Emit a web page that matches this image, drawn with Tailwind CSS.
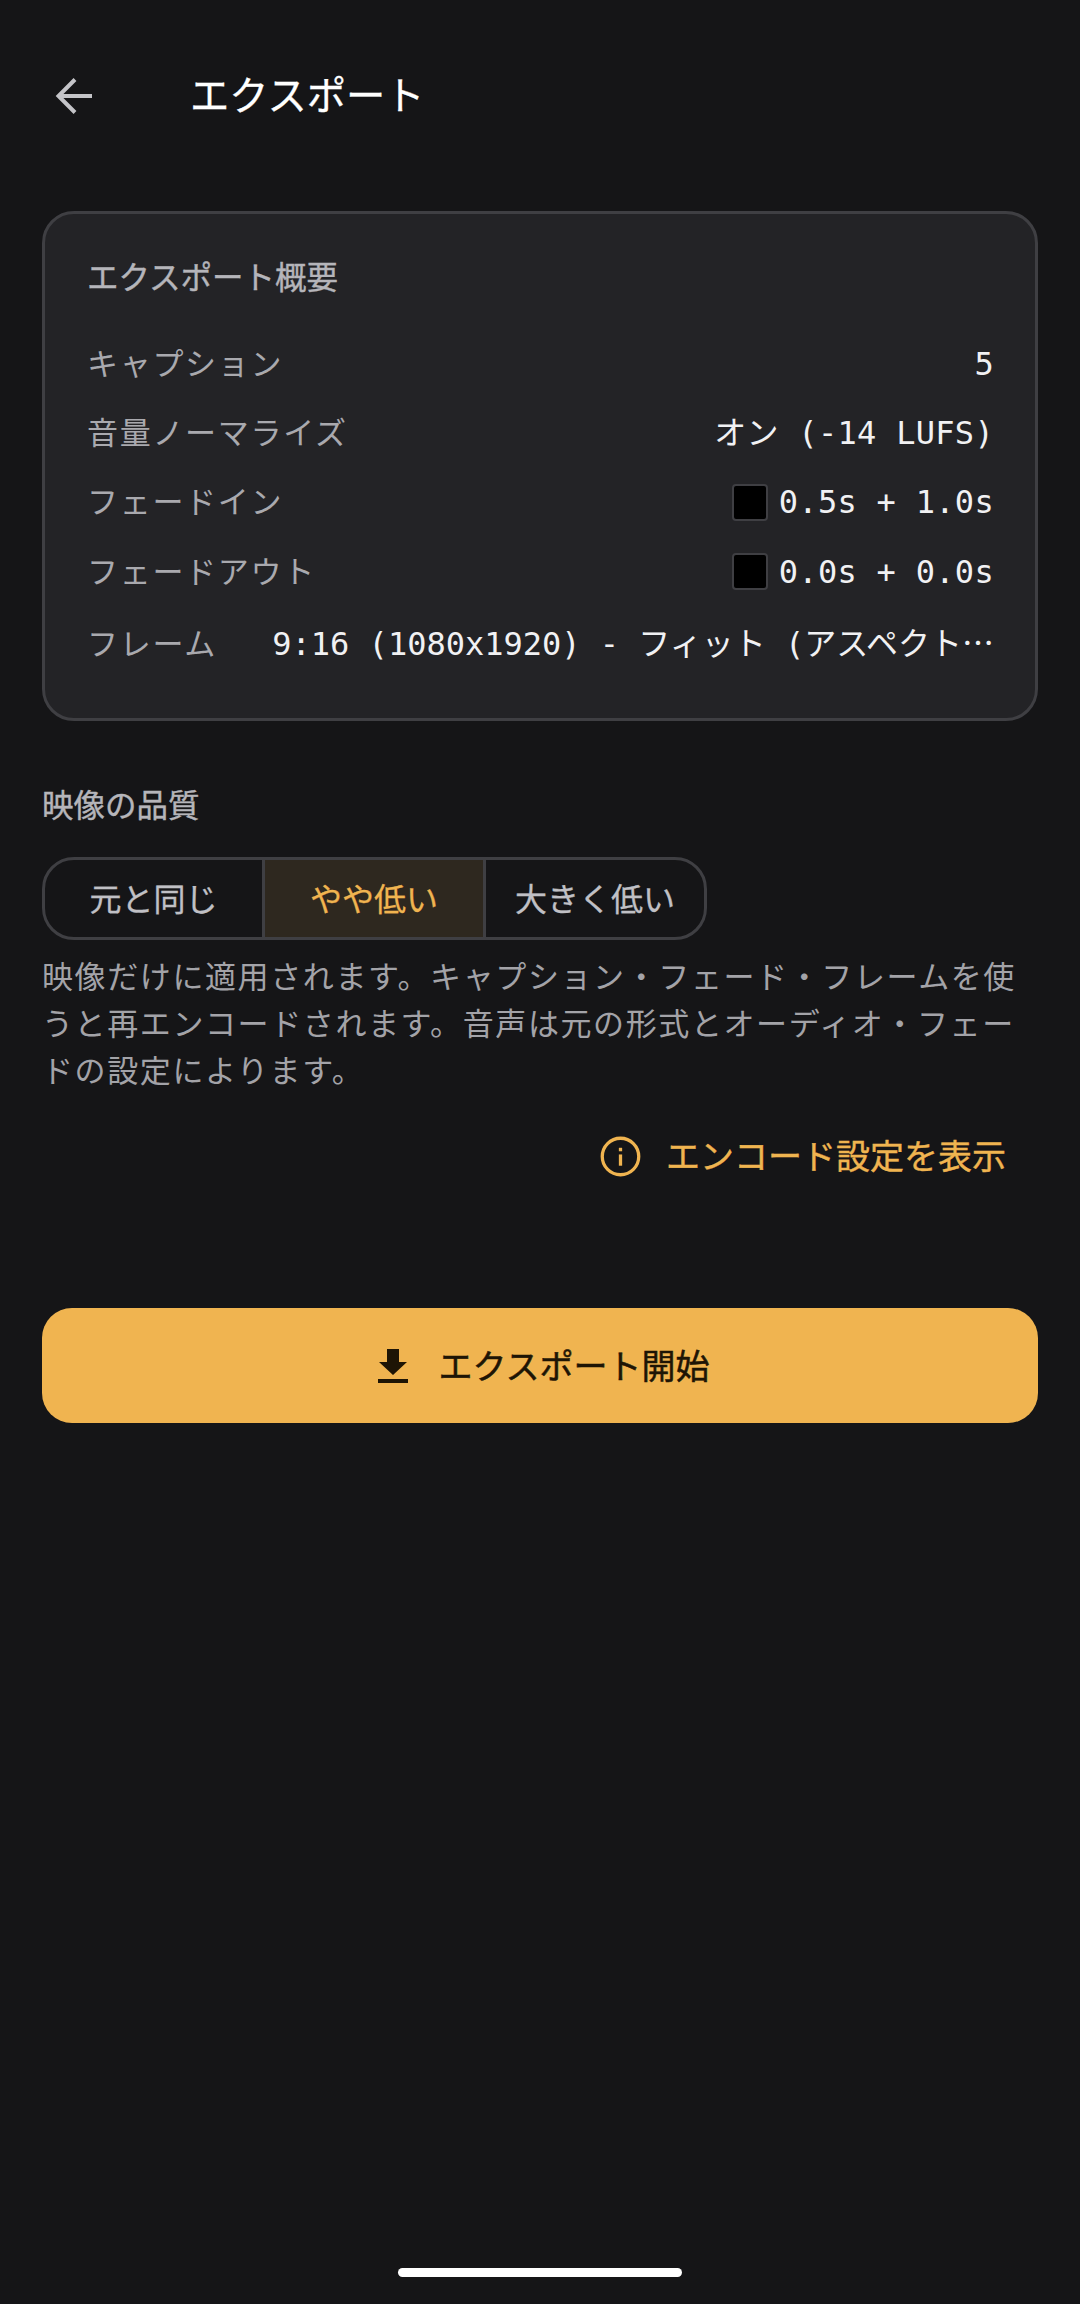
<!DOCTYPE html>
<html lang="ja"><head><meta charset="utf-8">
<script src="https://cdn.jsdelivr.net/npm/@tailwindcss/browser@4"></script>
</head>
<body class="m-0">
<div class="w-[1080px] h-[2304px] bg-[#151517] flex flex-col font-['Inter','Noto_Sans_CJK_JP',sans-serif] relative overflow-hidden">
  <header class="h-[192px] flex items-center pl-[52px] shrink-0">
    <svg class="w-[44px] h-[44px] text-[#c4c4c8]" viewBox="0 0 44 44" fill="none" stroke="currentColor" stroke-width="4"><path d="M40 22H7M23 5.5L6.5 22L23 38.5"/></svg>
    <h1 class="ml-[94px] text-[39.3px] leading-[48px] text-white font-normal [-webkit-text-stroke:0.3px_currentColor]">エクスポート</h1>
  </header>
  <main class="px-[42px] flex flex-col">
    <section class="mt-[19px] h-[510px] rounded-[32px] border-[3px] border-[#3f3f43] bg-[#232326] px-[41px] pt-[42px] flex flex-col">
      <h2 class="ml-[1px] text-[31.5px] leading-[44px] font-normal text-[#b5b5ba] [-webkit-text-stroke:0.4px_currentColor]">エクスポート概要</h2>
      <div class="mt-[40px] ml-[1px] flex flex-col gap-[21.2px] text-[31px] leading-[48px] tracking-[1.7px] text-[#a9a9ae]">
        <div class="flex justify-between items-center"><span>キャプション</span><span class="font-['DejaVu_Sans_Mono','Noto_Sans_CJK_JP',monospace] text-[#f1f1f3] tracking-[0.3px] text-[32px]">5</span></div>
        <div class="flex justify-between items-center"><span>音量ノーマライズ</span><span class="font-['DejaVu_Sans_Mono','Noto_Sans_CJK_JP',monospace] text-[#f1f1f3] tracking-[0.3px] text-[32px]">オン (-14 LUFS)</span></div>
        <div class="flex justify-between items-center"><span>フェードイン</span><span class="flex items-center gap-[11px] font-['DejaVu_Sans_Mono','Noto_Sans_CJK_JP',monospace] text-[#f1f1f3] tracking-[0.3px] text-[32px]"><i class="block w-[36px] h-[37px] bg-black border-[2px] border-[#3f3f43] rounded-[4px]"></i>0.5s + 1.0s</span></div>
        <div class="flex justify-between items-center"><span>フェードアウト</span><span class="flex items-center gap-[11px] font-['DejaVu_Sans_Mono','Noto_Sans_CJK_JP',monospace] text-[#f1f1f3] tracking-[0.3px] text-[32px]"><i class="block w-[36px] h-[37px] bg-black border-[2px] border-[#3f3f43] rounded-[4px]"></i>0.0s + 0.0s</span></div>
        <div class="flex justify-between items-center"><span class="shrink-0">フレーム</span><span class="mb-[3px] whitespace-nowrap font-['DejaVu_Sans_Mono','Noto_Sans_CJK_JP',monospace] text-[#f1f1f3] tracking-normal text-[32px]">9:16 (1080x1920) - フィット (アスペクト<span class="font-['Noto_Sans_CJK_JP']">…</span></span></div>
      </div>
    </section>
    <h2 class="mt-[63px] text-[31.5px] leading-[44px] font-normal text-[#b5b5ba] [-webkit-text-stroke:0.4px_currentColor]">映像の品質</h2>
    <div class="mt-[29px] w-[665px] h-[83px] flex rounded-[32px] border-[3px] border-[#3f3f43] overflow-hidden text-[32px] text-[#c0c0c5] [-webkit-text-stroke:0.3px_currentColor]">
      <div class="w-[217px] flex items-center justify-center pt-[2px]">元と同じ</div>
      <div class="w-[224px] flex items-center justify-center pt-[2px] border-x-[3px] border-[#3f3f43] bg-[#2e281f] text-[#f0b450]">やや低い</div>
      <div class="flex-1 flex items-center justify-center pt-[2px]">大きく低い</div>
    </div>
    <p class="mt-[13px] text-[31px] leading-[47.2px] tracking-[1.6px] text-[#a3a3a8]">映像だけに適用されます。キャプション・フェード・フレームを使うと再エンコードされます。音声は元の形式とオーディオ・フェードの設定によります。</p>
    <div class="mt-[38px] flex items-center justify-end pr-[32px] text-[34px] leading-[48px] text-[#f0b450] font-normal [-webkit-text-stroke:0.4px_currentColor]">
      <svg class="w-[41px] h-[41px] mr-[25px]" viewBox="0 0 40 40" fill="none" stroke="currentColor" stroke-width="3.2"><circle cx="20" cy="20" r="17.8"/><path d="M20 18v11"/><path d="M20 11.5v3.4"/></svg>
      エンコード設定を表示
    </div>
    <button class="mt-[127px] h-[115px] rounded-[30px] bg-[#f0b450] flex items-center justify-center pl-[6px] pt-[2px] text-[34px] font-normal text-[#1e1505] [-webkit-text-stroke:0.5px_currentColor]">
      <svg class="w-[32px] h-[36px] mr-[30px]" viewBox="0 0 32 36" fill="currentColor"><path d="M10 1h12v13h8L16 27 2 14h8z"/><path d="M1 31h30v4H1z"/></svg>
      エクスポート開始
    </button>
  </main>
  <div class="absolute left-[398px] top-[2268px] w-[284px] h-[9px] rounded-full bg-white"></div>
</div>
</body></html>
